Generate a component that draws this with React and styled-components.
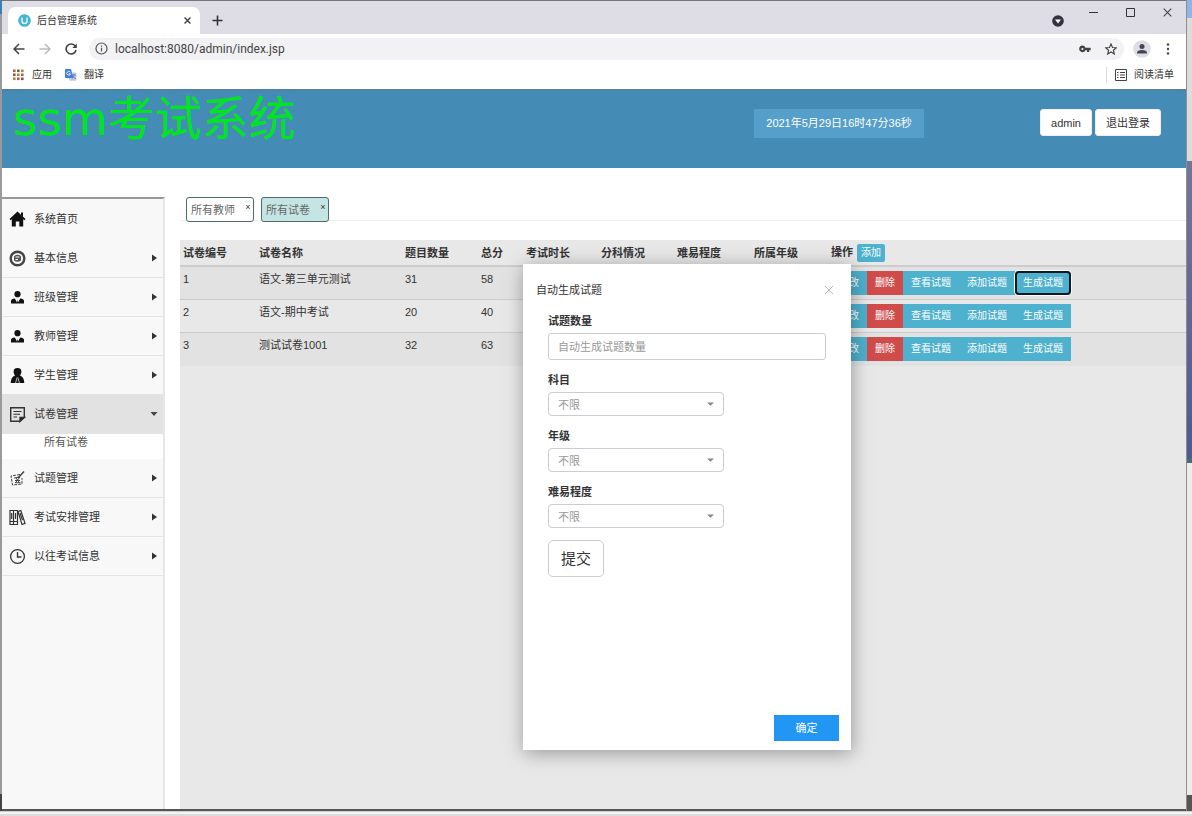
import React, { useState } from 'react';
import styled, { createGlobalStyle } from 'styled-components';

const GlobalStyle = createGlobalStyle`
  * {
    box-sizing: border-box;
  }
  body {
    margin: 0;
    font-family: "Liberation Sans", "Noto Sans CJK SC", sans-serif;
    font-size: 11px;
    line-height: 16px;
    color: #333;
  }
  button, input, select {
    font: inherit;
    color: inherit;
  }
  svg {
    display: block;
    flex: none;
  }
`;

const Desktop = styled.div`
  min-height: 100vh;
  display: grid;
  grid-template-columns: 2px minmax(0, 1fr) 6px;
  grid-template-rows: 1fr 5px;
  background: #eee;
`;

const LeftEdge = styled.div`
  background: linear-gradient(#3f7fae 0 14px, #9a9a9d 14px 794px, #444 794px);
`;

const RightEdge = styled.div`
  border-left: 1px solid #8e8e92;
  background: linear-gradient(
    #8fb6e8 0 18px,
    #dcdcdc 18px 161px,
    #73769a 161px,
    #4d5a90 458px,
    #4c6b78 458px 463px,
    #ececec 463px 795px,
    #555 795px
  );
`;

const BottomEdge = styled.div`
  grid-column: 1 / -1;
  background: linear-gradient(#d0cfd0 0 1px, #f4f4f4 1px 3px, #dcdcdc 3px);
`;

const Window = styled.div`
  display: flex;
  flex-direction: column;
  background: #fff;
  border-top: 1px solid #77757f;
  border-bottom: 2px solid #555;
`;

/* browser frame */

const TabStrip = styled.div`
  height: 33px;
  display: flex;
  align-items: flex-end;
  padding-left: 6px;
  background: #dedde6;
`;

const BrowserTab = styled.div`
  width: 192px;
  height: 27px;
  display: flex;
  align-items: center;
  gap: 6px;
  padding: 0 8px 0 10px;
  border-radius: 7px 7px 0 0;
  background: #fff;
  font-size: 10px;
  color: #333;
`;

const TabTitle = styled.span`
  flex: 1;
`;

const IconButton = styled.button`
  display: flex;
  align-items: center;
  justify-content: center;
  width: ${props => props.$width || 16}px;
  height: 16px;
  padding: 0;
  border: none;
  background: none;
  color: ${props => props.$color || '#444'};
`;

const NewTab = styled.div`
  height: 27px;
  padding: 0 9px;
  display: flex;
  align-items: center;
`;

const WindowButtons = styled.div`
  margin-left: auto;
  align-self: stretch;
  display: flex;
  align-items: flex-start;
  gap: 21px;
  padding: 3px 11px 0 0;
`;

const UpdateButton = styled(IconButton)`
  margin-top: 9px;
`;

const AddressRow = styled.div`
  height: 29px;
  display: flex;
  align-items: center;
  gap: 10px;
  padding: 0 10px 0 9px;
`;

const AddressBar = styled.div`
  flex: 1;
  height: 22px;
  display: flex;
  align-items: center;
  gap: 10px;
  padding: 0 5px 0 6px;
  border-radius: 11px;
  background: #f2f2f4;
`;

const AddressInput = styled.input`
  flex: 1;
  min-width: 0;
  margin-left: -5px;
  padding: 0 2px;
  border: none;
  outline: none;
  background: none;
  font-family: Roboto, sans-serif;
  font-size: 12px;
  color: #444;
`;

const BookmarkRow = styled.div`
  height: 26px;
  display: flex;
  align-items: center;
  gap: 13px;
  padding: 0 12px 3px 10px;
  font-size: 10px;
  color: #333;
`;

const Bookmark = styled.a`
  display: flex;
  align-items: center;
  gap: 7px;
  color: inherit;
  text-decoration: none;
`;

const ReadingList = styled(Bookmark)`
  margin-left: auto;
  padding-left: 8px;
  border-left: 1px solid #ddd;
`;

/* page */

const Header = styled.header`
  height: 79px;
  display: flex;
  align-items: flex-start;
  padding: 18px 25px 0 11px;
  border-top: 2px solid #4b84a8;
  background: #448cb6;
`;

const Logo = styled.h1`
  flex: 1;
  margin: -8px 0 0;
  font-family: "DejaVu Sans", "Noto Sans CJK SC", sans-serif;
  font-size: 47px;
  line-height: 36px;
  font-weight: 400;
  color: #00e61e;
`;

const Clock = styled.div`
  width: 170px;
  height: 29px;
  margin-right: 113px;
  background: #559fca;
  color: #fff;
  line-height: 29px;
  text-align: center;
  white-space: nowrap;
`;

const HeaderButton = styled.button`
  height: 27px;
  margin-left: 3px;
  padding: 0 10px;
  border: 1px solid #eee;
  border-radius: 3px;
  background: #fff;
`;

const Body = styled.div`
  flex: 1;
  display: flex;
  gap: 15px;
  padding-top: 29px;
`;

const Sidebar = styled.nav`
  width: 163px;
  padding-top: 1px;
  border-top: 2px solid #999;
  border-right: 2px solid #e6e6e6;
  background: #f8f8f8;
`;

const MenuItem = styled.a`
  height: 39px;
  display: flex;
  align-items: center;
  gap: 8px;
  padding: 0 5px 0 7px;
  border-bottom: 1px solid ${props => (props.$plain ? 'transparent' : '#e4e4e4')};
  background: ${props => (props.$active ? '#e2e2e2' : 'none')};
  color: #333;
  text-decoration: none;
`;

const MenuLabel = styled.span`
  flex: 1;
`;

const SubItem = styled.a`
  display: block;
  height: 25px;
  padding: 0 42px;
  background: #fff;
  color: #555;
  text-decoration: none;
`;

const Content = styled.main`
  flex: 1;
  min-width: 0;
  display: flex;
  flex-direction: column;
`;

const PageTabs = styled.div`
  display: flex;
  gap: 7px;
  padding-left: 6px;
  margin-bottom: 18px;
  background: linear-gradient(#fff 0 23px, #eee 23px 24px, #fff 24px);
`;

const PageTab = styled.div`
  height: 25px;
  display: flex;
  align-items: center;
  gap: 9px;
  padding: 1px 1px 0 4px;
  border: 1px solid #4b6e66;
  border-radius: 3px;
  background: ${props => (props.$active ? '#c5e5e4' : '#fff')};
  color: #666;
`;

const TabClose = styled.button`
  align-self: flex-start;
  width: 8px;
  padding: 0;
  border: none;
  background: none;
  font-size: 9px;
  color: #333;
`;

const Panel = styled.section`
  position: relative;
  flex: 1;
  background: #e8e8e8;
`;

const Table = styled.table`
  width: 100%;
  border-collapse: collapse;
  table-layout: fixed;
`;

const HeadCell = styled.th`
  width: ${props => (props.$width ? `${props.$width}px` : 'auto')};
  height: 26px;
  padding: 1px 3px 0;
  border-bottom: 2px solid #ccc;
  text-align: left;
  font-weight: 700;
  color: #333;
  white-space: nowrap;
`;

const Row = styled.tr`
  background: ${props => (props.$odd ? '#e2e2e2' : '#e8e8e8')};
`;

const Cell = styled.td`
  height: 33px;
  padding: 4px 3px;
  border-top: 1px solid #ccc;
  vertical-align: top;
  white-space: nowrap;
`;

const AddButton = styled.button`
  height: 18px;
  margin-left: 4px;
  padding: 0 4px;
  border: none;
  border-radius: 2px;
  background: #4eb1cd;
  color: #fff;
  font-size: 10px;
  font-weight: 400;
`;

const ButtonGroup = styled.div`
  display: flex;
  border-radius: 2px;
`;

const RowButton = styled.button`
  height: 24px;
  padding: 0 8px;
  border: none;
  background: ${props => (props.$danger ? '#d04c4b' : '#4eb1cd')};
  color: #fff;
  font-size: 10px;
  line-height: 24px;
  ${props => props.$focused && `
    border-radius: 4px;
    outline: 2px solid #101828;
    outline-offset: -2px;
    box-shadow: 0 0 0 1px #fff;
  `}
`;

/* dialog */

const Dialog = styled.div`
  position: absolute;
  left: 343px;
  top: 24px;
  width: 328px;
  height: 486px;
  display: flex;
  flex-direction: column;
  background: #fff;
  box-shadow: 1px 3px 18px rgba(0, 0, 0, 0.35);
`;

const DialogHead = styled.div`
  display: flex;
  align-items: center;
  justify-content: space-between;
  padding: 18px 15px 6px 13px;
`;

const DialogForm = styled.form`
  flex: 1;
  display: flex;
  flex-direction: column;
  align-items: flex-start;
  padding: 0 25px;
`;

const FieldLabel = styled.label`
  margin: 10px 0 4px;
  font-weight: 700;
  &:first-child {
    margin-top: 9px;
  }
`;

const TextInput = styled.input`
  width: 100%;
  height: 27px;
  margin-bottom: 2px;
  padding: 0 9px;
  border: 1px solid #ccc;
  border-radius: 3px;
  background: #fff;
  &::placeholder {
    color: #999;
    opacity: 1;
  }
`;

const SelectBox = styled.div`
  width: 176px;
  display: grid;
  align-items: center;
  margin-bottom: 2px;
  > * {
    grid-area: 1 / 1;
  }
  > svg {
    justify-self: end;
    margin-right: 10px;
    pointer-events: none;
  }
`;

const Select = styled.select`
  width: 100%;
  height: 24px;
  padding: 2px 9px 0;
  border: 1px solid #ccc;
  border-radius: 4px;
  appearance: none;
  background: #fff;
  color: #999;
`;

const SubmitButton = styled.button`
  width: 56px;
  height: 37px;
  margin-top: 10px;
  padding: 0;
  border: 1px solid #ccc;
  border-radius: 5px;
  background: #fff;
  font-size: 15px;
`;

const DialogFoot = styled.div`
  display: flex;
  justify-content: flex-end;
  padding: 9px 12px;
`;

const ConfirmButton = styled.button`
  width: 65px;
  height: 26px;
  border: none;
  background: #2196f3;
  color: #fff;
`;

const HomeIcon = () => (
  <svg width="17" height="16" viewBox="0 0 17 16" fill="#111">
    <path d="M8.5 0.5 L16.5 8 L15.5 9.2 L14.2 8.2 V15.5 H10.3 V10.5 H6.8 V15.5 H2.8 V8.2 L1.5 9.2 L0.5 8 Z M12 1.5 H14 V5.5 L12 3.7 Z" />
  </svg>
);

const InfoIcon = () => (
  <svg width="17" height="17" viewBox="0 0 17 17" fill="none">
    <circle cx="8.5" cy="8.5" r="6.8" stroke="#444" strokeWidth="2.4" />
    <path d="M5 6.2 Q8.5 3.5 12 6.2 V10.5 Q8.5 13 5 10.5 Z" fill="#555" />
    <path d="M6.5 7 H10.5 M6.5 9.5 H9" stroke="#fff" strokeWidth="1.1" />
  </svg>
);

const PersonIcon = () => (
  <svg width="17" height="17" viewBox="0 0 17 17" fill="#111">
    <circle cx="8.5" cy="5.2" r="3.1" />
    <path d="M2 14.5 V11.8 Q2.2 9.6 5.8 9.4 L8 13.4 L8.5 10.6 L9 13.4 L11.2 9.4 Q14.8 9.6 15 11.8 V14.5 Z" />
  </svg>
);

const StudentIcon = () => (
  <svg width="17" height="17" viewBox="0 0 17 17" fill="#111">
    <path d="M8.5 1 Q12.6 1 12.4 5 Q12.2 7.3 11 8.6 Q15 9.8 15.3 16 H1.7 Q2 9.8 6 8.6 Q4.8 7.3 4.6 5 Q4.4 1 8.5 1 Z" />
    <path d="M6.6 16 L8.1 10.5 M10.4 16 L8.9 10.5" stroke="#ddd" strokeWidth="0.8" />
  </svg>
);

const PaperIcon = () => (
  <svg width="17" height="17" viewBox="0 0 17 17" fill="none" stroke="#333" strokeWidth="1.4">
    <path d="M11 15.3 H1.7 V1.7 H15.3 V11" />
    <path d="M4.5 5.5 H12.5 M4.5 8.3 H11 M4.5 11 H8" strokeWidth="1.1" />
    <path d="M11 15.5 V11.5 H15.5 Z" fill="#111" />
  </svg>
);

const EditIcon = () => (
  <svg width="17" height="17" viewBox="0 0 17 17" fill="none" stroke="#444" strokeWidth="1">
    <path d="M11 4.5 L2 6 L3.5 15 L13 14 V8" strokeDasharray="3 1" />
    <path d="M5 8 L11 7 M6 10.5 H11 M6 12.7 H11.5 M7 8 L10.5 12.7 M11 7 L6.5 12.7" />
    <path d="M9 8 L15 1.5" strokeWidth="1.5" />
  </svg>
);

const BooksIcon = () => (
  <svg width="17" height="17" viewBox="0 0 17 17" fill="none" stroke="#333" strokeWidth="1.2">
    <path d="M1 1.5 H4.5 V15.5 H1 Z M4.5 1.5 H8.5 V15.5 H4.5 Z M9 2.5 L11.8 1.6 L16 14.3 L13 15.5 Z" />
    <path d="M2.7 4 V10 M6.5 4 V10 M1 12.5 H8.5 M11 4 L13.5 11" />
  </svg>
);

const ClockIcon = () => (
  <svg width="17" height="17" viewBox="0 0 17 17" fill="none" stroke="#333" strokeWidth="1.3">
    <circle cx="8.5" cy="8.5" r="6.9" />
    <path d="M8.5 4 V9 H12.5" />
  </svg>
);

const RightCaret = () => (
  <svg width="8" height="8" viewBox="0 0 8 8"><path d="M2 0.5 L7 4 L2 7.5 Z" fill="#333" /></svg>
);

const DownCaret = () => (
  <svg width="8" height="8" viewBox="0 0 8 8"><path d="M0.5 2 H7.5 L4 6 Z" fill="#444" /></svg>
);

const Cross = ({ size = 9, width = 1.2 }) => (
  <svg width={size} height={size} viewBox="0 0 10 10" stroke="currentColor" strokeWidth={width}>
    <path d="M0.8 0.8 L9.2 9.2 M9.2 0.8 L0.8 9.2" />
  </svg>
);

const menu = [
  { label: '系统首页', icon: HomeIcon, plain: true },
  { label: '基本信息', icon: InfoIcon },
  { label: '班级管理', icon: PersonIcon },
  { label: '教师管理', icon: PersonIcon },
  { label: '学生管理', icon: StudentIcon },
  { label: '试卷管理', icon: PaperIcon, children: ['所有试卷'] },
  { label: '试题管理', icon: EditIcon },
  { label: '考试安排管理', icon: BooksIcon },
  { label: '以往考试信息', icon: ClockIcon },
];

const columns = [
  ['试卷编号', 76],
  ['试卷名称', 146],
  ['题目数量', 76],
  ['总分', 45],
  ['考试时长', 75],
  ['分科情况', 76],
  ['难易程度', 77],
  ['所属年级', 77],
];

const papers = [
  { id: 1, name: '语文-第三单元测试', count: 31, score: 58 },
  { id: 2, name: '语文-期中考试', count: 20, score: 40 },
  { id: 3, name: '测试试卷1001', count: 32, score: 63 },
];

const Browser = () => (
  <>
    <TabStrip>
      <BrowserTab>
        <svg width="13" height="13" viewBox="0 0 13 13">
          <circle cx="6.5" cy="6.5" r="6.3" fill="#45b4d3" />
          <path d="M4 3.5 V7 Q4 9.5 6.5 9.5 Q9 9.5 9 7 V3.5" fill="none" stroke="#e2f5fa" strokeWidth="1.5" />
        </svg>
        <TabTitle>后台管理系统</TabTitle>
        <IconButton aria-label="关闭标签页" $width={10}><Cross size={7} width={2} /></IconButton>
      </BrowserTab>
      <NewTab>
        <IconButton aria-label="新标签页">
          <svg width="11" height="11" viewBox="0 0 11 11" stroke="#333" strokeWidth="1.6"><path d="M5.5 0.5 V10.5 M0.5 5.5 H10.5" /></svg>
        </IconButton>
      </NewTab>
      <WindowButtons>
        <UpdateButton aria-label="搜索标签页" $width={12}>
          <svg width="12" height="12" viewBox="0 0 12 12"><circle cx="6" cy="6" r="5.8" fill="#333340" /><path d="M3 4.5 H9 L6 8.5 Z" fill="#fff" /></svg>
        </UpdateButton>
        <IconButton aria-label="最小化">
          <svg width="9" height="9" viewBox="0 0 9 9" stroke="#333"><path d="M0 4.5 H9" /></svg>
        </IconButton>
        <IconButton aria-label="最大化">
          <svg width="9" height="9" viewBox="0 0 9 9" fill="none" stroke="#333"><path d="M0.5 0.5 H8.5 V8.5 H0.5 Z" /></svg>
        </IconButton>
        <IconButton aria-label="关闭"><Cross /></IconButton>
      </WindowButtons>
    </TabStrip>
    <AddressRow>
      <IconButton aria-label="后退">
        <svg width="12" height="12" viewBox="0 0 12 12" fill="none" stroke="#444" strokeWidth="1.5"><path d="M11.5 6 H1.2 M6 1 L1 6 L6 11" /></svg>
      </IconButton>
      <IconButton aria-label="前进">
        <svg width="12" height="12" viewBox="0 0 12 12" fill="none" stroke="#bbb" strokeWidth="1.5"><path d="M0.5 6 H10.8 M6 1 L11 6 L6 11" /></svg>
      </IconButton>
      <IconButton aria-label="刷新">
        <svg width="12" height="12" viewBox="0 0 12 12" fill="none" stroke="#444" strokeWidth="1.6"><path d="M10.3 3.2 A5 5 0 1 0 11 7" /><path d="M11.8 0.5 V5 H7.3 Z" fill="#444" stroke="none" /></svg>
      </IconButton>
      <AddressBar>
        <svg width="13" height="13" viewBox="0 0 13 13" fill="none" stroke="#555" strokeWidth="1.2"><circle cx="6.5" cy="6.5" r="5.5" /><path d="M6.5 5.8 V9.5 M6.5 3.4 V4.7" /></svg>
        <AddressInput aria-label="地址" defaultValue="localhost:8080/admin/index.jsp" />
        <IconButton aria-label="密码">
          <svg width="12" height="8" viewBox="0 0 12 8"><path d="M3.4 0.6 A3.3 3.3 0 1 0 6.5 5.2 H8 V7 H10.2 V5.2 H11.7 V2.8 H6.5 A3.3 3.3 0 0 0 3.4 0.6 Z M3.4 2.9 A1.1 1.1 0 1 1 3.4 5.1 A1.1 1.1 0 1 1 3.4 2.9 Z" fill="#444" fillRule="evenodd" /></svg>
        </IconButton>
        <IconButton aria-label="收藏">
          <svg width="12" height="12" viewBox="0 0 24 24" fill="none" stroke="#444" strokeWidth="2.3"><path d="M12 1.8 L15 9 L22.5 9.6 L16.8 14.5 L18.6 22 L12 18 L5.4 22 L7.2 14.5 L1.5 9.6 L9 9 Z" /></svg>
        </IconButton>
      </AddressBar>
      <IconButton aria-label="用户">
        <svg width="18" height="18" viewBox="0 0 18 18"><circle cx="9" cy="9" r="8.8" fill="#dddde6" /><circle cx="9" cy="6.5" r="2.5" fill="#444452" /><path d="M4 13.5 V12.5 Q4.3 10 9 10 Q13.7 10 14 12.5 V13.5 Z" fill="#444452" /></svg>
      </IconButton>
      <IconButton aria-label="菜单">
        <svg width="4" height="12" viewBox="0 0 4 12" fill="#444"><circle cx="2" cy="1.5" r="1.2" /><circle cx="2" cy="6" r="1.2" /><circle cx="2" cy="10.5" r="1.2" /></svg>
      </IconButton>
    </AddressRow>
    <BookmarkRow>
      <Bookmark href="#apps">
        <svg width="13" height="12" viewBox="0 0 13 12">
          {[0, 1, 2].map(r => [0, 1, 2].map(c => (
            <rect key={`${r}${c}`} x={1 + c * 4} y={0.5 + r * 4} width="2.6" height="2.6" fill={['#c0564a', '#7d5a48', '#a8853c'][(r + c) % 3]} />
          )))}
        </svg>
        应用
      </Bookmark>
      <Bookmark href="#translate">
        <svg width="12" height="12" viewBox="0 0 12 12">
          <rect x="4" y="3.5" width="7.5" height="8.3" rx="1" fill="#c3cbe0" />
          <path d="M7 6 H11 M9 5 V6 Q8.8 8.5 7 9.5 M7.5 7 Q9 9 11 9.8" stroke="#5f75a8" strokeWidth="0.8" fill="none" />
          <path d="M1 0 H6 L8.3 9 H1 Q0 9 0 8 V1 Q0 0 1 0 Z" fill="#3f7de8" />
          <path d="M5.3 3.2 A1.9 1.9 0 1 0 5.6 4.8 H3.8" stroke="#fff" strokeWidth="0.9" fill="none" />
        </svg>
        翻译
      </Bookmark>
      <ReadingList href="#reading">
        <svg width="12" height="12" viewBox="0 0 12 12" fill="none" stroke="#444"><path d="M0.5 0.5 H11.5 V11.5 H0.5 Z M2 3.5 H3.5 M5 3.5 H10 M2 6 H3.5 M5 6 H10 M2 8.5 H3.5 M5 8.5 H10" /></svg>
        阅读清单
      </ReadingList>
    </BookmarkRow>
  </>
);

const SelectField = ({ id, label }) => (
  <>
    <FieldLabel htmlFor={id}>{label}</FieldLabel>
    <SelectBox>
      <Select id={id}>
        <option>不限</option>
      </Select>
      <svg width="7" height="4" viewBox="0 0 7 4"><path d="M0 0.5 H7 L3.5 3.8 Z" fill="#888" /></svg>
    </SelectBox>
  </>
);

const GenerateDialog = ({ onClose }) => (
  <Dialog role="dialog" aria-labelledby="dialog-title">
    <DialogHead>
      <span id="dialog-title">自动生成试题</span>
      <IconButton aria-label="关闭" $color="#bbb" $width={14} onClick={onClose}><Cross size={10} width={1} /></IconButton>
    </DialogHead>
    <DialogForm onSubmit={e => e.preventDefault()}>
      <FieldLabel htmlFor="amount">试题数量</FieldLabel>
      <TextInput id="amount" placeholder="自动生成试题数量" />
      <SelectField id="subject" label="科目" />
      <SelectField id="grade" label="年级" />
      <SelectField id="level" label="难易程度" />
      <SubmitButton type="submit">提交</SubmitButton>
    </DialogForm>
    <DialogFoot>
      <ConfirmButton type="button" onClick={onClose}>确定</ConfirmButton>
    </DialogFoot>
  </Dialog>
);

const App = () => {
  const [openFor, setOpenFor] = useState(1);

  return (
    <Desktop>
      <GlobalStyle />
      <LeftEdge />
      <Window>
        <Browser />
        <Header>
          <Logo>ssm考试系统</Logo>
          <Clock>2021年5月29日16时47分36秒</Clock>
          <HeaderButton>admin</HeaderButton>
          <HeaderButton>退出登录</HeaderButton>
        </Header>
        <Body>
          <Sidebar>
            {menu.map(({ label, icon: Icon, plain, children }) => (
              <React.Fragment key={label}>
                <MenuItem href="#menu" $plain={plain} $active={!!children}>
                  <Icon />
                  <MenuLabel>{label}</MenuLabel>
                  {!plain && (children ? <DownCaret /> : <RightCaret />)}
                </MenuItem>
                {children && children.map(child => <SubItem key={child} href="#papers">{child}</SubItem>)}
              </React.Fragment>
            ))}
          </Sidebar>
          <Content>
            <PageTabs>
              <PageTab>所有教师<TabClose aria-label="关闭所有教师">×</TabClose></PageTab>
              <PageTab $active>所有试卷<TabClose aria-label="关闭所有试卷">×</TabClose></PageTab>
            </PageTabs>
            <Panel>
              <Table>
                <thead>
                  <tr>
                    {columns.map(([name, width]) => <HeadCell key={name} $width={width}>{name}</HeadCell>)}
                    <HeadCell>操作<AddButton>添加</AddButton></HeadCell>
                  </tr>
                </thead>
                <tbody>
                  {papers.map((paper, i) => (
                    <Row key={paper.id} $odd={i % 2 === 0}>
                      <Cell>{paper.id}</Cell>
                      <Cell>{paper.name}</Cell>
                      <Cell>{paper.count}</Cell>
                      <Cell>{paper.score}</Cell>
                      <Cell />
                      <Cell />
                      <Cell />
                      <Cell />
                      <Cell>
                        <ButtonGroup>
                          <RowButton>修改</RowButton>
                          <RowButton $danger>删除</RowButton>
                          <RowButton>查看试题</RowButton>
                          <RowButton>添加试题</RowButton>
                          <RowButton $focused={openFor === paper.id} onClick={() => setOpenFor(paper.id)}>生成试题</RowButton>
                        </ButtonGroup>
                      </Cell>
                    </Row>
                  ))}
                </tbody>
              </Table>
              {openFor && <GenerateDialog onClose={() => setOpenFor(null)} />}
            </Panel>
          </Content>
        </Body>
      </Window>
      <RightEdge />
      <BottomEdge />
    </Desktop>
  );
};

export default App;
